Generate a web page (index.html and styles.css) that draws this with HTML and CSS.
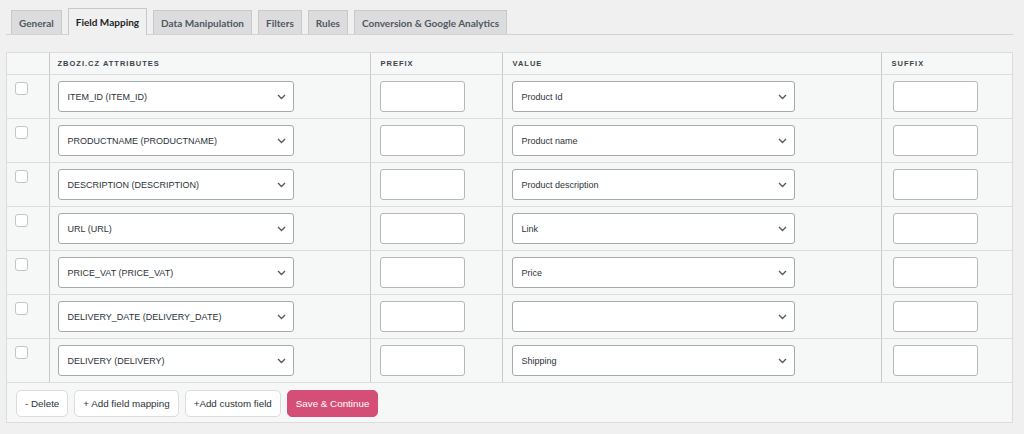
FILE: index.html
```html
<!DOCTYPE html>
<html lang="en">

<head>
  <meta charset="UTF-8">
  <meta name="viewport" content="width=device-width, initial-scale=1.0">
  <title>Field Mapping</title>
  <link rel="stylesheet" href="styles.css">
</head>

<body>
  <div class="wrap">
    <nav class="tabs">
      <a class="tab">General</a>
      <a class="tab active">Field Mapping</a>
      <a class="tab">Data Manipulation</a>
      <a class="tab">Filters</a>
      <a class="tab">Rules</a>
      <a class="tab">Conversion &amp; Google Analytics</a>
    </nav>

    <div class="mapping">
      <table>
        <colgroup>
          <col style="width:42px">
          <col style="width:321px">
          <col style="width:132px">
          <col style="width:379px">
          <col>
        </colgroup>
        <thead>
          <tr>
            <th></th>
            <th>Zbozi.cz attributes</th>
            <th>Prefix</th>
            <th>Value</th>
            <th>Suffix</th>
          </tr>
        </thead>
        <tbody id="rows"></tbody>
      </table>

      <div class="actions">
        <button class="btn">- Delete</button>
        <button class="btn">+ Add field mapping</button>
        <button class="btn">+Add custom field</button>
        <button class="btn primary">Save &amp; Continue</button>
      </div>
    </div>
  </div>

  <script>
    const fields = [
      ['ITEM_ID (ITEM_ID)', 'Product Id'],
      ['PRODUCTNAME (PRODUCTNAME)', 'Product name'],
      ['DESCRIPTION (DESCRIPTION)', 'Product description'],
      ['URL (URL)', 'Link'],
      ['PRICE_VAT (PRICE_VAT)', 'Price'],
      ['DELIVERY_DATE (DELIVERY_DATE)', ''],
      ['DELIVERY (DELIVERY)', 'Shipping']
    ];

    const chevron = '<svg width="9" height="6" viewBox="0 0 9 6"><path d="M1 1l3.5 3.5L8 1" fill="none" stroke="#50575e" stroke-width="1.3"/></svg>';

    function fakeSelect(text) {
      return '<div class="select"><span>' + text + '</span>' + chevron + '</div>';
    }

    const tbody = document.getElementById('rows');
    fields.forEach(function (f) {
      const tr = document.createElement('tr');
      tr.innerHTML =
        '<td><span class="check"></span></td>' +
        '<td>' + fakeSelect(f[0]) + '</td>' +
        '<td><input type="text" class="field"></td>' +
        '<td>' + fakeSelect(f[1]) + '</td>' +
        '<td><input type="text" class="field"></td>';
      tbody.appendChild(tr);
    });
  </script>
</body>

</html>
```

FILE: styles.css
```css
body {
  margin: 0;
  background: #f0f0f0;
  font-family: "Liberation Sans", Arial, sans-serif;
  color: #2c3338;
}

.wrap {
  padding: 9px 11px 0 6px;
}

.tabs {
  display: flex;
  align-items: flex-end;
  gap: 6px;
  padding-left: 5px;
  border-bottom: 1px solid #d3d3d3;
  height: 25px;
}

.tab {
  font-family: Lato, "Open Sans", sans-serif;
  font-weight: bold;
  font-size: 10px;
  color: #50575e;
  background: #dcdcde;
  border: 1px solid #c8c9cb;
  border-bottom: none;
  height: 24px;
  line-height: 24px;
  padding: 0 7px;
  box-sizing: border-box;
}

.tab.active {
  background: #f0f0f0;
  color: #1d2327;
  height: 27px;
  line-height: 27px;
  margin-bottom: -1px;
}

.mapping {
  margin-top: 17px;
  background: #f6f7f7;
  border: 1px solid #dcdcde;
}

table {
  width: 100%;
  border-collapse: collapse;
  table-layout: fixed;
}

th {
  text-align: left;
  font-size: 7.5px;
  font-weight: bold;
  letter-spacing: 1px;
  text-transform: uppercase;
  color: #3c434a;
  height: 21px;
  padding: 0 10px;
  border-bottom: 1px solid #dcdcde;
}

td {
  height: 43px;
  padding: 0 9px;
  border-bottom: 1px solid #dcdcde;
  vertical-align: middle;
}

th + th,
td + td {
  border-left: 1px solid #c8c9cb;
}

td:first-child {
  padding-left: 8px;
}

th:nth-child(2),
td:nth-child(2) {
  padding-left: 8px;
}

td:last-child {
  padding-left: 11px;
}

.check {
  display: block;
  width: 11px;
  height: 11px;
  border: 1px solid #c3c4c7;
  border-radius: 3px;
  background: #fff;
  margin-top: -15px;
}

.select {
  display: flex;
  align-items: center;
  justify-content: space-between;
  width: 236px;
  height: 31px;
  box-sizing: border-box;
  padding: 0 7px 0 9px;
  background: #fff;
  border: 1px solid #a7aaad;
  border-radius: 3px;
  font-size: 9px;
  color: #2c3338;
}

td:nth-child(4) .select {
  width: 283px;
}

.field {
  display: block;
  width: 85px;
  height: 31px;
  box-sizing: border-box;
  border: 1px solid #b5b7ba;
  border-radius: 3px;
  background: #fff;
  margin: 0;
}

.actions {
  display: flex;
  gap: 6px;
  padding: 7px 9px 5px;
}

.btn {
  font-family: "Liberation Sans", Arial, sans-serif;
  font-size: 9.8px;
  color: #2c3338;
  background: #fff;
  border: 1px solid #dcdcde;
  border-radius: 5px;
  height: 27px;
  padding: 0 8px;
}

.btn.primary {
  background: #d54e78;
  border-color: #d54e78;
  color: #fff;
  padding: 0 8px;
}
```
